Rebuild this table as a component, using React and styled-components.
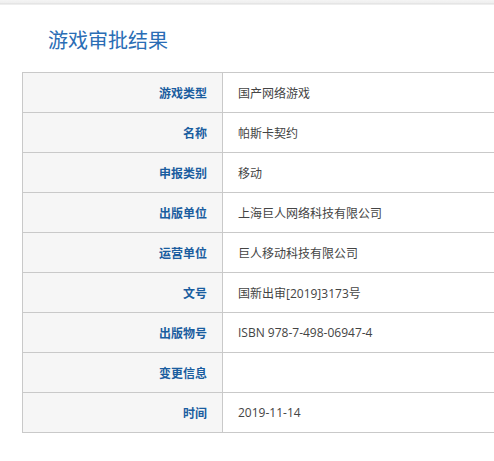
import React from "react";
import styled, { createGlobalStyle } from "styled-components";

const rows = [
  { label: "游戏类型", value: "国产网络游戏" },
  { label: "名称", value: "帕斯卡契约" },
  { label: "申报类别", value: "移动" },
  { label: "出版单位", value: "上海巨人网络科技有限公司" },
  { label: "运营单位", value: "巨人移动科技有限公司" },
  { label: "文号", value: "国新出审[2019]3173号" },
  { label: "出版物号", value: "ISBN 978-7-498-06947-4" },
  { label: "变更信息", value: "" },
  { label: "时间", value: "2019-11-14" },
];

const App = () => {
  return (
    <>
      <GlobalStyle />
      <TopShadow />
      <Page>
        <Title>游戏审批结果</Title>
        <TableClip>
          <ResultTable>
            <tbody>
              {rows.map((row, index) => (
                <tr key={index}>
                  <LabelCell>{row.label}</LabelCell>
                  <ValueCell>{row.value}</ValueCell>
                </tr>
              ))}
            </tbody>
          </ResultTable>
        </TableClip>
      </Page>
    </>
  );
};

export default App;

const GlobalStyle = createGlobalStyle`
  body {
    margin: 0;
    background: #fff;
    font-family: "Noto Sans", "Noto Sans CJK SC", sans-serif;
    overflow: hidden;
  }
`;

const TopShadow = styled.div`
  height: 5px;
  background: linear-gradient(to bottom, #f4f4f4 0%, #efefef 55%, #e2e2e2 75%, #f6f6f6 100%);
`;

const Page = styled.div`
  padding: 0 0 0 22px;
`;

const Title = styled.h2`
  margin: 0;
  padding: 21px 0 0 26px;
  height: 46px;
  font-size: 20px;
  font-weight: 400;
  line-height: 28px;
  color: #2a6db5;
  font-family: "Noto Sans CJK SC", sans-serif;
`;

const TableClip = styled.div`
  overflow: hidden;
`;

const ResultTable = styled.table`
  border-collapse: collapse;
  width: calc(100% + 30px);
  border-left: 1px solid #c9c9c9;
  border-top: 1px solid #c9c9c9;
  tr {
    height: 40px;
  }
  td {
    border-bottom: 1px solid #c9c9c9;
    font-size: 12px;
    padding: 0 15px;
    vertical-align: middle;
  }
`;

const LabelCell = styled.td`
  width: 169px;
  text-align: right;
  background: #f6f6f6;
  border-right: 1px solid #c9c9c9;
  color: #1a5d9f;
  font-weight: 700;
  font-family: "Noto Sans CJK SC", sans-serif;
`;

const ValueCell = styled.td`
  color: #444;
  font-family: "Open Sans", "Noto Sans CJK SC", sans-serif;
`;
